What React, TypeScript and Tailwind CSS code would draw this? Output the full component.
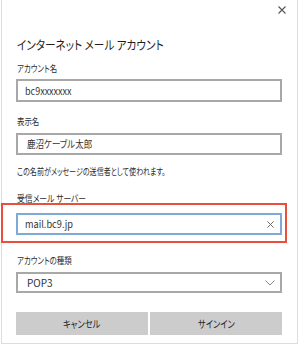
import React from 'react';

const jp = "font-['Noto_Sans_CJK_JP','Noto_Sans',sans-serif] [font-feature-settings:'palt']";

// Yu Gothic UI is narrower than Noto, so the Japanese labels are condensed a bit
const Label = ({ text, className = '', squeeze = 'scale-x-[0.78]' }: { text: string; className?: string; squeeze?: string }) => (
  <div className={`text-[9.5px] leading-[14px] text-[#2b2b2b] ${className}`}>
    <span className={`inline-block whitespace-nowrap origin-left ${squeeze}`}>{text}</span>
  </div>
);

const Field = ({ value, className = '', squeeze = '', children }: { value: string; className?: string; squeeze?: string; children?: React.ReactNode }) => (
  <div className={`flex items-center justify-between w-[266px] border-2 px-[7px] ${className}`}>
    <span className={`inline-block whitespace-nowrap origin-left text-[10px] leading-[14px] text-[#333] ${squeeze}`}>{value}</span>
    {children}
  </div>
);

export default function App() {
  return (
    <div className={`w-[300px] h-[345px] bg-white ${jp}`}>
      <div className="relative ml-[1px] w-[297px] h-[344px] border border-t-0 border-[#dcdcdc] pl-[14px]">
        {/* close */}
        <div className="flex justify-end pr-[11px] pt-[6px] h-[20px]">
          <svg width="8" height="8" viewBox="0 0 8 8">
            <path d="M0.5 0.5 L7.5 7.5 M7.5 0.5 L0.5 7.5" stroke="#555" strokeWidth="1.1" />
          </svg>
        </div>

        <div className="mt-[17px] pl-[1px] text-[12.5px] leading-[16px] text-[#1f1f1f]">
          <span className="inline-block whitespace-nowrap origin-left scale-x-[0.85]">インターネット メール アカウント</span>
        </div>

        <Label text="アカウント名" className="mt-[8px] pl-[1px]" />
        <Field value="bc9xxxxxxx" className="mt-[4px] h-[23px] border-[#a8a8a8]" squeeze="scale-x-[0.9]" />

        <Label text="表示名" className="mt-[12px] pl-[1px]" />
        <Field value="鹿沼ケーブル太郎" className="mt-[5px] h-[22px] border-[#a8a8a8] pl-[9px]" squeeze="scale-x-[0.85]" />

        <Label text="この名前がメッセージの送信者として使われます。" className="mt-[9px] pl-[1px]" squeeze="scale-x-[0.74]" />

        <Label text="受信メール サーバー" className="mt-[13px] pl-[1px]" squeeze="scale-x-[0.82]" />
        <Field value="mail.bc9.jp" className="mt-[8px] h-[22px] border-[#7eaad8] pr-[6px]" squeeze="scale-x-[0.92]">
          <svg width="7" height="7" viewBox="0 0 8 8">
            <path d="M0.5 0.5 L7.5 7.5 M7.5 0.5 L0.5 7.5" stroke="#666" strokeWidth="1.1" />
          </svg>
        </Field>

        <Label text="アカウントの種類" className="mt-[18px] pl-[1px]" />
        <Field value="POP3" className="mt-[5px] h-[21px] border-[#a8a8a8] pl-[9px] pr-[5px]">
          <svg width="10" height="6" viewBox="0 0 10 6">
            <path d="M0.5 0.5 L5 5 L9.5 0.5" fill="none" stroke="#888" strokeWidth="1" />
          </svg>
        </Field>

        <div className="mt-[19px] flex gap-[2px] w-[266px]">
          <div className="flex-1 h-[23px] bg-[#cccccc] flex items-center justify-center text-[10px] text-[#222]">
            <span className="inline-block scale-x-[0.82]">キャンセル</span>
          </div>
          <div className="flex-1 h-[23px] bg-[#cccccc] flex items-center justify-center text-[10px] text-[#222]">
            <span className="inline-block scale-x-[0.82]">サインイン</span>
          </div>
        </div>

        {/* highlight annotation */}
        <div className="absolute left-[-1px] top-[203px] w-[286px] h-[40px] border-2 border-[#e8503a] pointer-events-none" />
      </div>
    </div>
  );
}
